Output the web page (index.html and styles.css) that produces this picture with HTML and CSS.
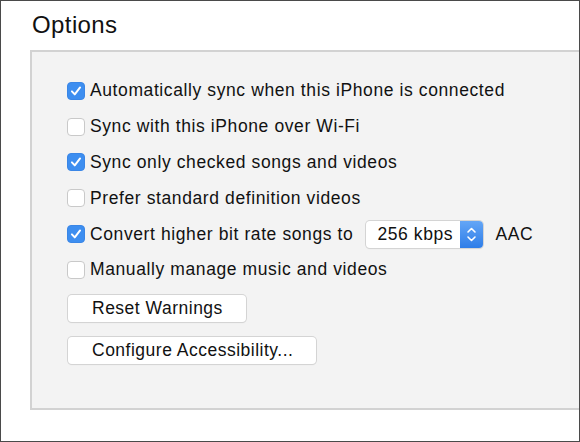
FILE: index.html
```html
<!DOCTYPE html>
<html>
<head>
<meta charset="utf-8">
<link rel="stylesheet" href="styles.css">
</head>
<body>
<div class="frame">
  <h1 class="title">Options</h1>
  <div class="panel">
    <div class="row"><span class="cb checked"><svg viewBox="0 0 18 18"><path d="M4.4 9.4 L7.6 12.8 L13.6 5" /></svg></span><span class="label">Automatically sync when this iPhone is connected</span></div>
    <div class="row"><span class="cb"></span><span class="label">Sync with this iPhone over Wi-Fi</span></div>
    <div class="row"><span class="cb checked"><svg viewBox="0 0 18 18"><path d="M4.4 9.4 L7.6 12.8 L13.6 5" /></svg></span><span class="label">Sync only checked songs and videos</span></div>
    <div class="row"><span class="cb"></span><span class="label">Prefer standard definition videos</span></div>
    <div class="row"><span class="cb checked"><svg viewBox="0 0 18 18"><path d="M4.4 9.4 L7.6 12.8 L13.6 5" /></svg></span><span class="label">Convert higher bit rate songs to</span>
      <span class="popup"><span class="popup-text">256 kbps</span><span class="stepper"><svg viewBox="0 0 23 27"><path d="M8 11 L11.5 7.5 L15 11 M8 16 L11.5 19.5 L15 16" /></svg></span></span>
      <span class="label aac">AAC</span></div>
    <div class="row"><span class="cb"></span><span class="label">Manually manage music and videos</span></div>
    <div class="buttons">
      <button class="btn">Reset Warnings</button>
      <button class="btn">Configure Accessibility...</button>
    </div>
  </div>
</div>
</body>
</html>
```
FILE: styles.css
```css
* { box-sizing: border-box; }
html, body { margin: 0; padding: 0; background: #fff; }
body {
  font-family: "Liberation Sans", Arial, sans-serif;
  color: #111;
}
.frame {
  width: 580px;
  height: 442px;
  border: 1px solid #4a4a4a;
  background: #fff;
  display: flex;
  flex-direction: column;
}
.title {
  margin: 0;
  padding: 9px 0 0 31px;
  height: 49px;
  font-size: 24px;
  font-weight: normal;
  line-height: 30px;
  letter-spacing: 0.4px;
  color: #111;
}
.panel {
  margin-left: 29px;
  height: 360px;
  background: #f3f3f3;
  border: 2px solid #d2d2d2;
  border-right: none;
  padding: 21px 0 0 35px;
  display: flex;
  flex-direction: column;
}
.row {
  height: 35.8px;
  display: flex;
  align-items: center;
}
.cb {
  width: 18px;
  height: 18px;
  border-radius: 4px;
  background: #fff;
  border: 1px solid #c9c9c9;
  flex: none;
  display: flex;
}
.cb.checked {
  background: #3d8ef0;
  border-color: #3a86e6;
}
.cb svg { width: 16px; height: 16px; }
.cb svg path {
  fill: none;
  stroke: #fff;
  stroke-width: 2.2;
  stroke-linecap: round;
  stroke-linejoin: round;
}
.label {
  margin-left: 5px;
  font-size: 17.5px;
  letter-spacing: 0.6px;
  color: #111;
}
.popup {
  margin-left: 13px;
  width: 117px;
  height: 27px;
  border-radius: 4px;
  background: #fff;
  box-shadow: 0 0 0 1px #d4d4d4, 0 1px 1px rgba(0,0,0,0.12);
  display: flex;
  align-items: center;
  overflow: hidden;
}
.popup-text {
  flex: 1;
  padding-left: 11px;
  font-size: 17.5px;
  letter-spacing: 0.6px;
}
.stepper {
  width: 23px;
  height: 27px;
  background: linear-gradient(#64a6f6, #2e7de8);
  display: flex;
}
.stepper svg { width: 23px; height: 27px; }
.stepper svg path {
  fill: none;
  stroke: #fff;
  stroke-width: 1.6;
  stroke-linecap: round;
  stroke-linejoin: round;
}
.aac { margin-left: 12px; }
.buttons {
  margin-top: 7px;
  display: flex;
  flex-direction: column;
  align-items: flex-start;
  gap: 15px;
}
.btn {
  height: 27px;
  padding: 0 23px 0 24px;
  font-family: "Liberation Sans", Arial, sans-serif;
  font-size: 17.5px;
  letter-spacing: 0.5px;
  color: #111;
  background: #fff;
  border: none;
  border-radius: 4px;
  box-shadow: 0 0 0 1px #d4d4d4, 0 1px 1px rgba(0,0,0,0.12);
  margin-left: 1px;
}
```
